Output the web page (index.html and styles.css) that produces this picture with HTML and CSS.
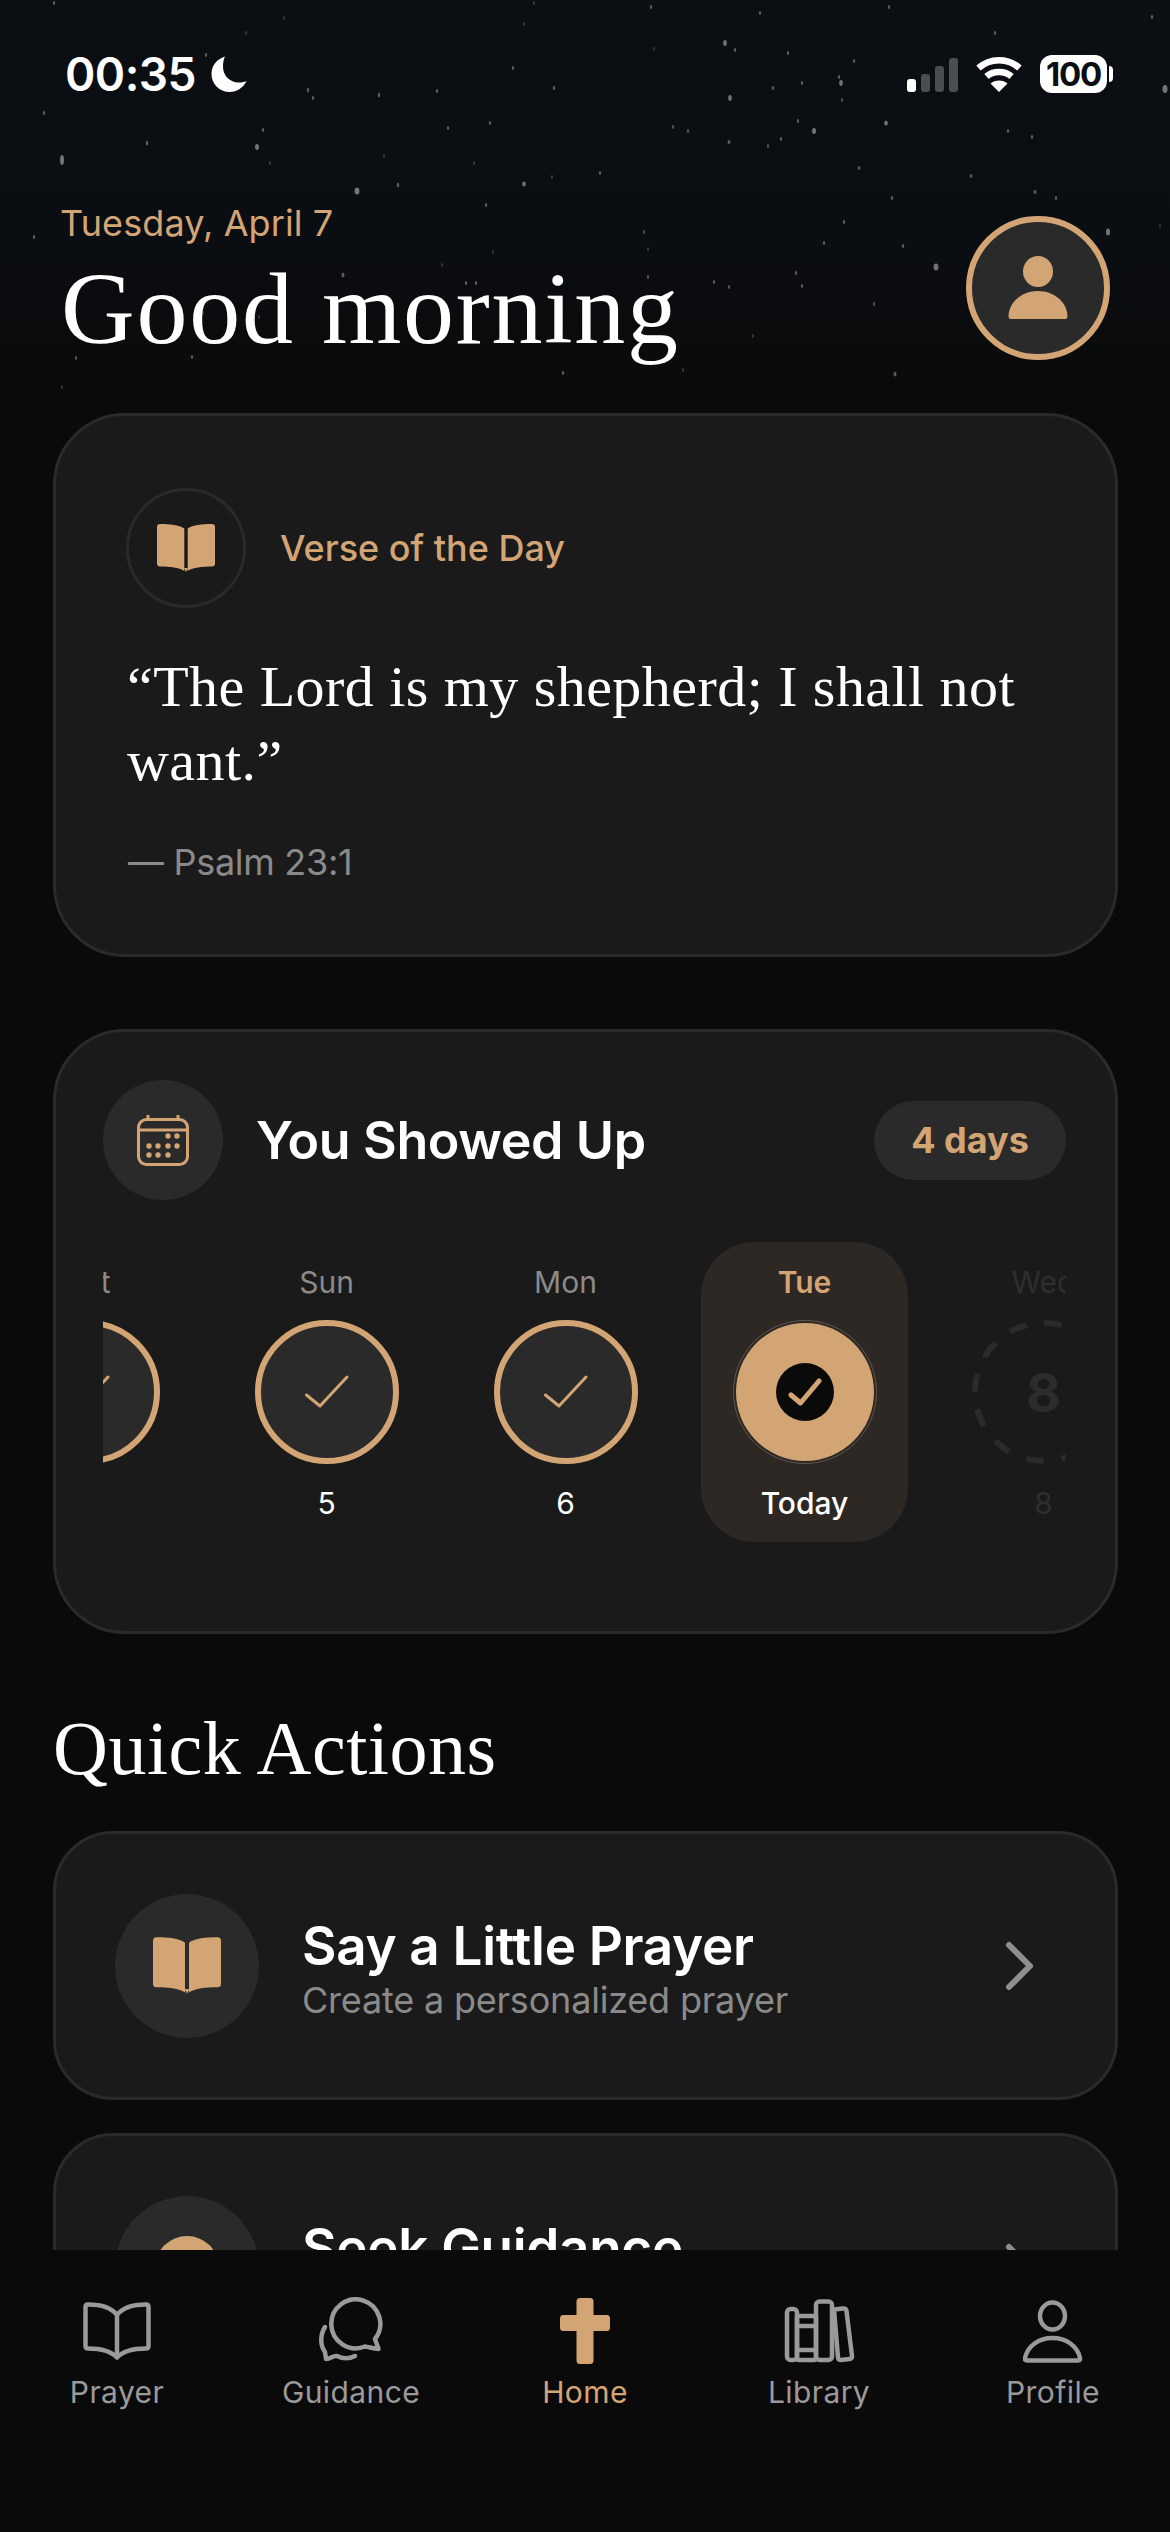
FILE: index.html
```html
<!DOCTYPE html>
<html lang="en">
<head>
    <meta charset="UTF-8">
    <meta name="viewport" content="width=device-width, initial-scale=1.0">
    <title>Home</title>
    <link rel="stylesheet" href="styles.css">
</head>
<body>
    <svg class="defs" width="0" height="0">
        <symbol id="book-fill" viewBox="0 0 58 48">
            <path d="M3 0C13 0 22 1 27.300 4.500V47C22 43.500 13 42.500 3 42.500Q0 42.500 0 39.500V3Q0 0 3 0Z"/>
            <path d="M55 0C45 0 36 1 30.700 4.500V47C36 43.500 45 42.500 55 42.500Q58 42.500 58 39.500V3Q58 0 55 0Z"/>
            <path d="M27 44H31L29 48Z"/>
        </symbol>
        <symbol id="check" viewBox="0 0 44 34">
            <path d="M1.500 20L15 31L42 2" fill="none" stroke="#d4a574" stroke-width="3" stroke-linecap="round" stroke-linejoin="round"/>
        </symbol>
        <symbol id="chevron" viewBox="0 0 30 50">
            <path d="M4 4L25 25L4 46" fill="none" stroke="#8e8e8e" stroke-width="6" stroke-linecap="round" stroke-linejoin="round"/>
        </symbol>
    </svg>

    <main class="screen">
        <!-- star field behind the header -->
        <svg class="stars" width="1170" height="400" viewBox="0 0 1170 400">
            <g fill="#d8d8d8" opacity="0.5">
                <ellipse cx="62" cy="160" rx="2" ry="5"/><ellipse cx="357" cy="191" rx="2.500" ry="3.500"/><ellipse cx="257" cy="147" rx="2" ry="3"/>
                <ellipse cx="1165" cy="89" rx="2.500" ry="4"/><ellipse cx="1108" cy="232" rx="2" ry="3.500"/><ellipse cx="936" cy="267" rx="2.500" ry="3.500"/>
                <ellipse cx="814" cy="131" rx="2" ry="3"/><ellipse cx="730" cy="98" rx="1.800" ry="3"/><ellipse cx="725" cy="43" rx="1.800" ry="3"/>
                <ellipse cx="841" cy="83" rx="1.800" ry="3"/><ellipse cx="886" cy="123" rx="1.800" ry="2.500"/><ellipse cx="524" cy="184" rx="1.800" ry="2.500"/>
            </g>
            <g fill="#cfcfcf" opacity="0.4">
                <ellipse cx="54" cy="3" rx="1.200" ry="2"/><ellipse cx="206" cy="55" rx="1.200" ry="2"/><ellipse cx="308" cy="90" rx="1.200" ry="2.500"/>
                <ellipse cx="313" cy="98" rx="1.200" ry="2"/><ellipse cx="379" cy="95" rx="1.200" ry="2.500"/><ellipse cx="437" cy="91" rx="1.200" ry="2"/>
                <ellipse cx="554" cy="88" rx="1.200" ry="2"/><ellipse cx="513" cy="68" rx="1.200" ry="2"/><ellipse cx="448" cy="128" rx="1.200" ry="2"/>
                <ellipse cx="490" cy="123" rx="1.200" ry="2"/><ellipse cx="263" cy="130" rx="1.200" ry="2"/><ellipse cx="147" cy="143" rx="1.200" ry="2.500"/>
                <ellipse cx="44" cy="113" rx="1.200" ry="2"/><ellipse cx="398" cy="185" rx="1.200" ry="2.500"/><ellipse cx="486" cy="205" rx="1.200" ry="2"/>
                <ellipse cx="34" cy="237" rx="1.200" ry="2"/><ellipse cx="343" cy="275" rx="1.500" ry="2.500"/><ellipse cx="466" cy="283" rx="1.200" ry="2"/>
                <ellipse cx="476" cy="283" rx="1.200" ry="2"/><ellipse cx="192" cy="357" rx="1.200" ry="2"/><ellipse cx="76" cy="358" rx="1" ry="2"/>
                <ellipse cx="563" cy="373" rx="1.200" ry="2"/><ellipse cx="651" cy="7" rx="1.200" ry="2"/><ellipse cx="760" cy="13" rx="1.200" ry="2"/>
                <ellipse cx="889" cy="7" rx="1.200" ry="2"/><ellipse cx="1152" cy="17" rx="1.200" ry="2"/><ellipse cx="995" cy="33" rx="1.200" ry="2"/>
                <ellipse cx="735" cy="50" rx="1.200" ry="2"/><ellipse cx="788" cy="53" rx="1.200" ry="2"/><ellipse cx="854" cy="61" rx="1.200" ry="2"/>
                <ellipse cx="839" cy="77" rx="1.200" ry="2"/><ellipse cx="802" cy="83" rx="1.200" ry="2"/><ellipse cx="773" cy="88" rx="1.200" ry="2"/>
                <ellipse cx="842" cy="100" rx="1" ry="2"/><ellipse cx="798" cy="121" rx="1.200" ry="2"/><ellipse cx="1008" cy="131" rx="1.200" ry="2"/>
                <ellipse cx="1032" cy="137" rx="1.200" ry="2"/><ellipse cx="673" cy="127" rx="1" ry="2"/><ellipse cx="688" cy="131" rx="1" ry="2"/>
                <ellipse cx="729" cy="142" rx="1.500" ry="2"/><ellipse cx="781" cy="139" rx="1.200" ry="2"/><ellipse cx="768" cy="146" rx="1" ry="2"/>
                <ellipse cx="859" cy="168" rx="1.200" ry="2"/><ellipse cx="600" cy="173" rx="1.200" ry="2"/><ellipse cx="971" cy="176" rx="1.200" ry="2"/>
                <ellipse cx="1035" cy="192" rx="1.500" ry="2"/><ellipse cx="1056" cy="198" rx="1.200" ry="2"/><ellipse cx="892" cy="198" rx="1.200" ry="2"/>
                <ellipse cx="844" cy="222" rx="1.200" ry="2"/><ellipse cx="824" cy="243" rx="1.200" ry="2"/><ellipse cx="903" cy="246" rx="1.200" ry="2"/>
                <ellipse cx="796" cy="273" rx="1.200" ry="2"/><ellipse cx="802" cy="286" rx="1.200" ry="2"/><ellipse cx="714" cy="282" rx="1.200" ry="2"/>
                <ellipse cx="729" cy="287" rx="1" ry="2"/><ellipse cx="648" cy="277" rx="1" ry="2"/><ellipse cx="644" cy="232" rx="1" ry="2"/>
                <ellipse cx="874" cy="304" rx="1" ry="2"/><ellipse cx="895" cy="374" rx="1.500" ry="2.500"/>
            </g>
            <g fill="#bdbdbd" opacity="0.25">
                <ellipse cx="246" cy="33" rx="1" ry="2"/><ellipse cx="284" cy="18" rx="1" ry="2"/><ellipse cx="524" cy="24" rx="1" ry="2"/>
                <ellipse cx="534" cy="3" rx="1" ry="2"/><ellipse cx="270" cy="163" rx="1" ry="2"/><ellipse cx="384" cy="156" rx="1" ry="2"/>
                <ellipse cx="474" cy="163" rx="1" ry="2"/><ellipse cx="552" cy="177" rx="1" ry="2"/><ellipse cx="442" cy="265" rx="1" ry="2"/>
                <ellipse cx="493" cy="252" rx="1" ry="2"/><ellipse cx="259" cy="317" rx="1" ry="2"/><ellipse cx="203" cy="313" rx="1" ry="2"/>
                <ellipse cx="62" cy="387" rx="1" ry="2"/><ellipse cx="654" cy="49" rx="1" ry="2"/><ellipse cx="1160" cy="226" rx="1" ry="2"/>
                <ellipse cx="648" cy="249" rx="1" ry="2"/><ellipse cx="753" cy="336" rx="1" ry="2"/><ellipse cx="683" cy="370" rx="1" ry="2"/>
            </g>
        </svg>

        <div class="status-bar">
            <div class="status-left">
                <span class="time">00:35</span>
                <svg width="36" height="36" viewBox="0 0 36 36"><path fill="#fff" d="M14 .5C5.500 3 .5 10 .5 18C.5 28 8.500 36 18.500 36C26 36 32.500 31.500 35.500 25C33 26 30 26.500 27.500 26.500C19 26.500 12 19.500 12 11C12 7 12.500 3.500 14 .5Z"/></svg>
            </div>
            <div class="status-right">
                <svg width="51" height="34" viewBox="0 0 51 34">
                    <rect x="0" y="21" width="9" height="13" rx="3" fill="#fff"/>
                    <rect x="14" y="16" width="9" height="18" rx="3" fill="#4a4e51"/>
                    <rect x="28" y="8" width="9" height="26" rx="3" fill="#4a4e51"/>
                    <rect x="42" y="0" width="9" height="34" rx="3" fill="#4a4e51"/>
                </svg>
                <svg width="48" height="36" viewBox="0 0 48 36">
                    <path d="M3.500 12C15 1.500 33 1.500 44.500 12M11.500 20.500C18 14.500 30 14.500 36.500 20.500" fill="none" stroke="#fff" stroke-width="6.500"/>
                    <path d="M24 36L15.500 27.500C20 23.500 28 23.500 32.500 27.500Z" fill="#fff"/>
                </svg>
                <div class="battery">100</div>
            </div>
        </div>

        <header class="page-header">
            <div>
                <div class="date">Tuesday, April 7</div>
                <h1 class="greeting">Good morning</h1>
            </div>
            <div class="avatar">
                <svg width="60" height="64" viewBox="0 0 60 64" fill="#d4a574">
                    <ellipse cx="30" cy="15.500" rx="15" ry="15.500"/>
                    <path d="M3 63H57Q59.500 63 59.500 60C59 46 46 35 30 35C14 35 1 46 .5 60Q.5 63 3 63Z"/>
                </svg>
            </div>
        </header>

        <section class="card verse-card">
            <div class="verse-head">
                <div class="verse-icon"><svg class="gold-fill" width="58" height="48"><use href="#book-fill"/></svg></div>
                <span class="verse-label">Verse of the Day</span>
            </div>
            <p class="verse-text">“The Lord is my shepherd; I shall not want.”</p>
            <div class="verse-ref">— Psalm 23:1</div>
        </section>

        <section class="card streak-card">
            <div class="streak-head">
                <div class="round-icon">
                    <svg width="52" height="52" viewBox="0 0 52 52" fill="#d4a574">
                        <rect x="1.500" y="5.500" width="49" height="45" rx="8" fill="none" stroke="#d4a574" stroke-width="3"/>
                        <path d="M1.500 16H50.500M11 1V5M41 1V5" fill="none" stroke="#d4a574" stroke-width="3"/>
                        <circle cx="31" cy="22" r="2.700"/><circle cx="40" cy="22" r="2.700"/>
                        <circle cx="12" cy="32" r="2.700"/><circle cx="21" cy="32" r="2.700"/><circle cx="31" cy="32" r="2.700"/><circle cx="40" cy="32" r="2.700"/>
                        <circle cx="12" cy="41" r="2.700"/><circle cx="21" cy="41" r="2.700"/><circle cx="31" cy="41" r="2.700"/>
                    </svg>
                </div>
                <h2 class="streak-title">You Showed Up</h2>
                <span class="streak-pill">4 days</span>
            </div>
            <div class="days-window">
                <div class="days">
                    <div class="day">
                        <span class="day-name">Sat</span>
                        <div class="day-ring"><svg width="44" height="34"><use href="#check"/></svg></div>
                        <span class="day-num">4</span>
                    </div>
                    <div class="day">
                        <span class="day-name">Sun</span>
                        <div class="day-ring"><svg width="44" height="34"><use href="#check"/></svg></div>
                        <span class="day-num">5</span>
                    </div>
                    <div class="day">
                        <span class="day-name">Mon</span>
                        <div class="day-ring"><svg width="44" height="34"><use href="#check"/></svg></div>
                        <span class="day-num">6</span>
                    </div>
                    <div class="day day-today">
                        <span class="day-name">Tue</span>
                        <div class="today-ring">
                            <div class="today-fill">
                                <div class="today-dot">
                                    <svg width="34" height="28" viewBox="0 0 34 28"><path d="M3 17L12.500 25L31 3" fill="none" stroke="#d4a574" stroke-width="5" stroke-linecap="round" stroke-linejoin="round"/></svg>
                                </div>
                            </div>
                        </div>
                        <span class="day-num">Today</span>
                    </div>
                    <div class="day day-future">
                        <span class="day-name">Wed</span>
                        <div class="future-ring">
                            <svg class="dashes" width="144" height="144" viewBox="0 0 144 144"><circle cx="72" cy="72" r="69" fill="none" stroke="#2a2a2a" stroke-width="6" stroke-dasharray="18 18.130" transform="rotate(-90 72 72)"/></svg>
                            <span class="future-num">8</span>
                        </div>
                        <span class="day-num">8</span>
                    </div>
                </div>
            </div>
        </section>

        <h2 class="section-title">Quick Actions</h2>

        <a class="action">
            <div class="action-icon"><svg class="gold-fill" width="68" height="57"><use href="#book-fill"/></svg></div>
            <div class="action-text">
                <div class="action-title">Say a Little Prayer</div>
                <div class="action-sub">Create a personalized prayer</div>
            </div>
            <svg class="action-arrow" width="30" height="50"><use href="#chevron"/></svg>
        </a>
        <a class="action">
            <div class="action-icon"><svg width="64" height="64" viewBox="0 0 64 64"><circle cx="32" cy="32" r="32" fill="#d4a574"/></svg></div>
            <div class="action-text">
                <div class="action-title">Seek Guidance</div>
                <div class="action-sub">Find wisdom for your day</div>
            </div>
            <svg class="action-arrow" width="30" height="50"><use href="#chevron"/></svg>
        </a>
    </main>

    <nav class="tabbar">
        <div class="tab">
            <svg width="68" height="58" viewBox="0 0 68 58" fill="none" stroke="#9a9a9a" stroke-width="4.500" stroke-linejoin="round">
                <path d="M34 13C28 5 18 2.500 5 2.500Q2.500 2.500 2.500 5V44Q2.500 46.500 5 46.500C16 46.500 27 48 34 55.500C41 48 52 46.500 63 46.500Q65.500 46.500 65.500 44V5Q65.500 2.500 63 2.500C50 2.500 40 5 34 13V55.500"/>
            </svg>
            <span>Prayer</span>
        </div>
        <div class="tab">
            <svg width="72" height="68" viewBox="-3 0 72 68" fill="none" stroke="#9a9a9a" stroke-width="4.500" stroke-linecap="round" stroke-linejoin="round">
                <path d="M57 42L60.500 52C55 51.500 51 50 47 49.500A24.500 24.500 0 1 1 57 42Z"/>
                <path d="M7 30C2 38 2 48 7 55L8 62C13 62 15 58 19 59C25 62 31 62 37 59"/>
            </svg>
            <span>Guidance</span>
        </div>
        <div class="tab tab-active">
            <svg width="50" height="66" viewBox="0 0 50 66" fill="#d4a574">
                <rect x="16.500" y="0" width="17" height="66" rx="3.500"/>
                <rect x="0" y="17" width="50" height="16" rx="3.500"/>
            </svg>
            <span>Home</span>
        </div>
        <div class="tab">
            <svg width="72" height="66" viewBox="0 0 72 66" fill="none" stroke="#9a9a9a" stroke-width="4.500" stroke-linejoin="round">
                <rect x="4" y="11" width="10" height="51" rx="3.500"/>
                <rect x="14" y="18" width="19" height="44" rx="2"/>
                <path d="M14 28H33M14 52H33"/>
                <rect x="33" y="3.500" width="16" height="58.500" rx="3.500"/>
                <path d="M51 11.500L60 10.500Q63 10.200 63.500 13L69 58Q69.300 60.800 66.500 61L58 62Q55.500 62 55 59.500Z"/>
            </svg>
            <span>Library</span>
        </div>
        <div class="tab">
            <svg width="60" height="64" viewBox="0 0 60 64" fill="none" stroke="#9a9a9a" stroke-width="4.500" stroke-linejoin="round">
                <ellipse cx="29.500" cy="17" rx="12.500" ry="13.500"/>
                <path d="M4 61.500H55Q57.500 61.500 57 59C54.500 47 43 39 29.500 39C16 39 4.500 47 2 59Q1.500 61.500 4 61.500Z"/>
            </svg>
            <span>Profile</span>
        </div>
    </nav>
</body>
</html>
```

FILE: styles.css
```css
* {
    box-sizing: border-box;
}
html, body {
    margin: 0;
    height: 100%;
}
body {
    width: 1170px;
    height: 2532px;
    overflow: hidden;
    display: flex;
    flex-direction: column;
    font-family: Inter, "Noto Sans", sans-serif;
    background: #0a0a0a;
    color: #fff;
}
.defs {
    position: absolute;
}
.gold-fill {
    fill: #d4a574;
}

.screen {
    position: relative;
    height: 2250px;
    flex-shrink: 0;
    overflow: hidden;
    background: linear-gradient(#0b0f14 0, #0a0d11 260px, #0a0a0a 400px);
}
.stars {
    position: absolute;
    top: 0;
    left: 0;
}

/* status bar */
.status-bar {
    position: relative;
    height: 201px;
    padding: 50px 57px 103px 65px;
    display: flex;
    justify-content: space-between;
    align-items: center;
}
.status-left {
    display: flex;
    align-items: center;
    gap: 15px;
}
.time {
    font-size: 46px;
    font-weight: 600;
    line-height: 48px;
    letter-spacing: -.5px;
}
.status-right {
    display: flex;
    align-items: center;
    gap: 17px;
}
.status-right svg:first-child {
    margin-top: 1px;
}
.battery {
    position: relative;
    width: 67px;
    height: 38px;
    margin-right: 6px;
    border-radius: 12px;
    background: #fff;
    color: #0b0f14;
    font-size: 33px;
    font-weight: 700;
    line-height: 38px;
    letter-spacing: -1.2px;
    text-align: center;
}
.battery::after {
    content: "";
    position: absolute;
    top: 11px;
    right: -6px;
    width: 4px;
    height: 16px;
    border-radius: 0 4px 4px 0;
    background: #fff;
}

/* header */
.page-header {
    position: relative;
    display: flex;
    justify-content: space-between;
    padding: 0 60px 0 61px;
    margin-bottom: 49px;
}
.date {
    margin-left: -1px;
    font-size: 36px;
    line-height: 44px;
    letter-spacing: .1px;
    color: #d4a574;
}
.greeting {
    margin: 9px 0 0;
    font-family: "Liberation Serif", serif;
    font-size: 102px;
    font-weight: 400;
    line-height: 110px;
    letter-spacing: 1.75px;
}
.avatar {
    width: 144px;
    height: 144px;
    margin-top: 15px;
    border: 6px solid #d4a574;
    border-radius: 50%;
    background: #2a2a2a;
    display: flex;
    align-items: center;
    justify-content: center;
}

/* cards */
.card {
    position: relative;
    margin: 0 52px 0 53px;
    border: 3px solid #2a2a2a;
    border-radius: 72px;
    background: #1a1a1a;
}
.verse-card {
    padding: 72px 70px 70px;
}
.verse-head {
    display: flex;
    align-items: center;
    gap: 34px;
}
.verse-icon {
    width: 120px;
    height: 120px;
    border: 3px solid #2a2a2a;
    border-radius: 50%;
    display: flex;
    align-items: center;
    justify-content: center;
}
.verse-label {
    font-size: 36px;
    font-weight: 500;
    color: #d4a574;
}
.verse-text {
    margin: 42px 0 0 1px;
    font-family: "Liberation Serif", serif;
    font-size: 58px;
    line-height: 74px;
    letter-spacing: .45px;
}
.verse-ref {
    margin: 42px 0 0 2px;
    font-size: 36px;
    line-height: 44px;
    letter-spacing: -.3px;
    color: #8a8a8a;
}

.streak-card {
    margin-top: 72px;
    padding: 48px 49px 89px 47px;
}
.streak-head {
    display: flex;
    align-items: center;
}
.round-icon {
    width: 120px;
    height: 120px;
    border-radius: 50%;
    background: #2a2a2a;
    display: flex;
    align-items: center;
    justify-content: center;
}
.streak-title {
    margin: 0 0 0 33px;
    flex: 1;
    font-size: 52px;
    font-weight: 600;
    letter-spacing: -.4px;
}
.streak-pill {
    width: 192px;
    height: 79px;
    border-radius: 40px;
    background: #2a2a2a;
    color: #d4a574;
    font-size: 36px;
    font-weight: 700;
    line-height: 79px;
    text-align: center;
}
.days-window {
    margin-top: 42px;
    overflow: hidden;
}
.days {
    display: flex;
    gap: 32px;
    margin-left: -119px;
}
.day {
    width: 207px;
    flex-shrink: 0;
    padding: 22px 0 21px;
    border-radius: 54px;
    display: flex;
    flex-direction: column;
    align-items: center;
}
.day-name, .day-num {
    font-size: 30px;
    line-height: 36px;
}
.day-name {
    color: #8a8a8a;
}
.day-num {
    margin-top: 21px;
}
.day-ring, .today-ring, .future-ring {
    position: relative;
    width: 144px;
    height: 144px;
    margin-top: 20px;
    border-radius: 50%;
    display: flex;
    align-items: center;
    justify-content: center;
}
.day-ring {
    border: 6px solid #d4a574;
    background: #2a2a2a;
}
.day-today {
    background: #2d2823;
}
.day-today .day-name {
    color: #d4a574;
    font-weight: 600;
}
.day-today .day-num {
    font-weight: 500;
}
.today-ring {
    border: 1px solid #5c5650;
}
.today-fill {
    width: 138px;
    height: 138px;
    border-radius: 50%;
    background: #d4a574;
    display: flex;
    align-items: center;
    justify-content: center;
}
.today-dot {
    width: 58px;
    height: 58px;
    border-radius: 50%;
    background: #0a0a0a;
    display: flex;
    align-items: center;
    justify-content: center;
}
.dashes {
    position: absolute;
    top: 0;
    left: 0;
}
.future-num {
    font-size: 54px;
    font-weight: 700;
    color: #2c2c2c;
}
.day-future .day-name, .day-future .day-num {
    color: #2e2e2e;
}

/* quick actions */
.section-title {
    margin: 69px 0 38px 53px;
    font-family: "Liberation Serif", serif;
    font-size: 76px;
    font-weight: 400;
    line-height: 90px;
    letter-spacing: .5px;
}
.action {
    height: 269px;
    margin: 0 52px 33px 53px;
    padding: 0 80px 0 59px;
    border: 3px solid #2a2a2a;
    border-radius: 60px;
    background: #1a1a1a;
    display: flex;
    align-items: center;
}
.action-icon {
    width: 144px;
    height: 144px;
    flex-shrink: 0;
    border-radius: 50%;
    background: #2a2a2a;
    display: flex;
    align-items: center;
    justify-content: center;
}
.action-text {
    flex: 1;
    margin-left: 43px;
    padding-top: 9px;
}
.action-title {
    font-size: 53px;
    font-weight: 600;
    line-height: 60px;
    letter-spacing: -.3px;
}
.action-sub {
    font-size: 36px;
    line-height: 48px;
    letter-spacing: -.2px;
    color: #8a8a8a;
}

/* tab bar */
.tabbar {
    flex: 1;
    padding-top: 47px;
    background: #0a0a0a;
    display: grid;
    grid-template-columns: repeat(5, 234px);
}
.tab {
    display: flex;
    flex-direction: column;
    align-items: center;
    font-size: 30px;
    line-height: 36px;
    letter-spacing: .4px;
    color: #9a9a9a;
}
.tab svg {
    height: 68px;
    margin-bottom: 9px;
}
.tab-active {
    color: #d4a574;
}
```
